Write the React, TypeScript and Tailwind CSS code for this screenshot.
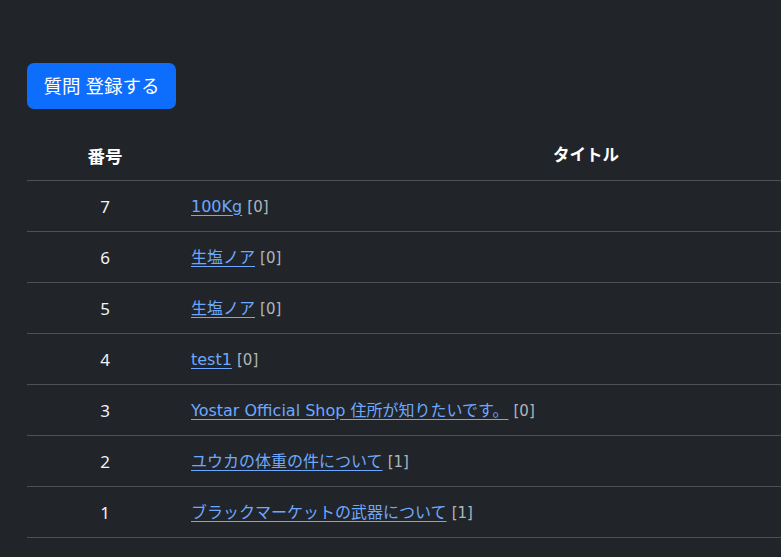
const rows = [
  { id: 7, title: "100Kg", count: 0 },
  { id: 6, title: "生塩ノア", count: 0 },
  { id: 5, title: "生塩ノア", count: 0 },
  { id: 4, title: "test1", count: 0 },
  { id: 3, title: "Yostar Official Shop 住所が知りたいです。", count: 0 },
  { id: 2, title: "ユウカの体重の件について", count: 1 },
  { id: 1, title: "ブラックマーケットの武器について", count: 1 },
];

export default function App() {
  return (
    <div
      className="min-h-screen w-full overflow-hidden bg-[#212529] text-[#dee2e6]"
      style={{ fontFamily: '"Noto Sans", "Noto Sans CJK JP", sans-serif' }}
    >
      <div className="pl-[27px] pt-[63px]">
        <button
          type="button"
          className="h-[46px] w-[149px] rounded-[7px] bg-[#0d6efd] text-[18.5px] leading-[30px] text-white"
        >
          質問 登録する
        </button>

        <table className="mt-[20px] w-[962px] border-collapse">
          <thead>
            <tr className="h-[51px] border-b border-[#4d5154]">
              <th className="w-[156px] pt-[3px] text-center text-[17.5px] font-bold text-white">番号</th>
              <th className="pt-[3px] text-center text-[16.5px] font-bold text-white">タイトル</th>
            </tr>
          </thead>
          <tbody>
            {rows.map((row) => (
              <tr key={row.id} className="h-[51px] border-b border-[#4d5154]">
                <td className="pt-[2px] text-center text-[17px] text-[#f1f3f5]">{row.id}</td>
                <td
                  className="pl-2 pt-[2px] text-[16px]"
                  style={{ fontFamily: '"DejaVu Sans", "Noto Sans CJK JP", sans-serif' }}
                >
                  <a href="#" className="text-[#6ea8fe] underline underline-offset-[3px]">
                    {row.title}
                  </a>{" "}
                  <span className="text-[15px] text-[#adb5bd]">[{row.count}]</span>
                </td>
              </tr>
            ))}
          </tbody>
        </table>
      </div>
    </div>
  );
}
